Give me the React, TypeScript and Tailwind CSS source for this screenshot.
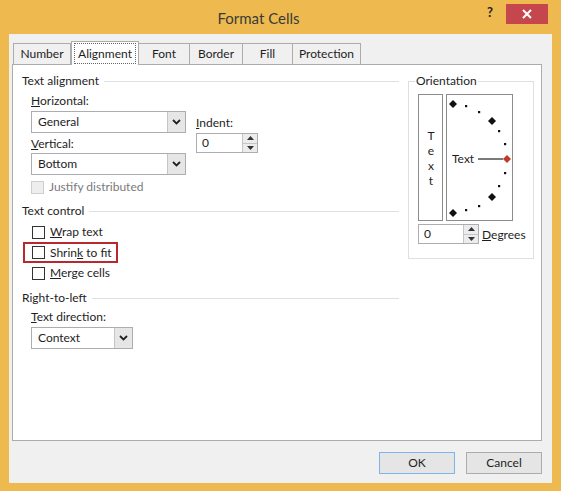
const font = { fontFamily: 'Lato, "Open Sans", "Liberation Sans", sans-serif' };

function Chevron() {
    return (
        <svg width="9" height="6" viewBox="0 0 9 6">
            <path d="M1 1 L4.5 4.5 L8 1" fill="none" stroke="#222" strokeWidth="1.8" />
        </svg>
    );
}

function Select({ value, width }: { value: string; width: string }) {
    return (
        <div className={`flex h-[22px] ${width} border border-[#abadb3] bg-white`}>
            <div className="flex-1 flex items-center pl-[6px] text-[12px] text-[#1e1e1e]">{value}</div>
            <div className="w-[18px] flex items-center justify-center bg-[#e6e6e6] border-l border-[#c5c5c5]">
                <Chevron />
            </div>
        </div>
    );
}

function Spinner({ value, width }: { value: string; width: string }) {
    return (
        <div className={`flex h-[20px] ${width} border border-[#abadb3] bg-white`}>
            <div className="flex-1 flex items-center pl-[5px] text-[12px] text-[#1e1e1e]">{value}</div>
            <div className="w-[15px] flex flex-col border-l border-[#c5c5c5] bg-[#ececec]">
                <div className="flex-1 flex items-center justify-center border-b border-[#c5c5c5]">
                    <svg width="7" height="4" viewBox="0 0 7 4"><path d="M0 4 L3.5 0 L7 4 Z" fill="#333" /></svg>
                </div>
                <div className="flex-1 flex items-center justify-center">
                    <svg width="7" height="4" viewBox="0 0 7 4"><path d="M0 0 L3.5 4 L7 0 Z" fill="#333" /></svg>
                </div>
            </div>
        </div>
    );
}

function GroupTitle({ title }: { title: string }) {
    return (
        <div className="flex items-center gap-[5px] text-[12px] text-[#1e1e1e] leading-[16px]">
            <span>{title}</span>
            <div className="flex-1 h-px bg-[#dcdfe3]" />
        </div>
    );
}

function Check({ label, u, disabled }: { label: [string, string, string]; u?: boolean; disabled?: boolean }) {
    return (
        <div className="flex items-center gap-[5px] h-[20px] text-[12px]">
            <div className={`w-[13px] h-[13px] border ${disabled ? "border-[#cfcfcf] bg-[#eeeeee]" : "border-[#333] bg-white"}`} />
            <span className={disabled ? "text-[#7a7a7a]" : "text-[#1e1e1e]"}>
                {label[0]}
                {u ? <span className="underline">{label[1]}</span> : label[1]}
                {label[2]}
            </span>
        </div>
    );
}

function Dial() {
    const small = [
        [19, 11], [32, 17], [52, 36], [58, 49], [58, 78], [52, 91], [32, 111], [19, 115],
    ];
    const big = [
        [6, 9], [45, 26], [45, 102], [6, 118],
    ];
    return (
        <div className="w-[67px] h-[127px] border border-[#8c8c8c] bg-white">
            <svg width="65" height="125" viewBox="0 0 65 125">
                {small.map(([x, y], i) => (
                    <rect key={i} x={x - 1} y={y - 1} width="2.2" height="2.2" fill="#111" />
                ))}
                {big.map(([x, y], i) => (
                    <path key={i} d={`M${x} ${y - 4} L${x + 4} ${y} L${x} ${y + 4} L${x - 4} ${y} Z`} fill="#111" />
                ))}
                <line x1="31" y1="64" x2="56" y2="64" stroke="#333" strokeWidth="1.3" />
                <path d="M60 60 L64 64 L60 68 L56 64 Z" fill="#c0392b" />
                <text x="5" y="68" fontSize="12" fill="#1e1e1e" style={font}>Text</text>
            </svg>
        </div>
    );
}

export default function App() {
    return (
        <div className="w-[561px] h-[491px] bg-[#eeba4f] flex flex-col overflow-hidden" style={font}>
            {/* title bar */}
            <div className="h-[34px] flex items-start relative">
                <div className="flex-1 text-center pt-[7px] pr-[44px] text-[15px] text-[#3a3a3a]">Format Cells</div>
                <div className="absolute left-[487px] top-[3px] text-[13px] font-bold text-[#222]">?</div>
                <div className="absolute left-[506px] top-[4px] w-[42px] h-[20px] bg-[#c6464d] flex items-center justify-center">
                    <svg width="10" height="10" viewBox="0 0 10 10">
                        <path d="M1 1 L9 9 M9 1 L1 9" stroke="#fff" strokeWidth="2" />
                    </svg>
                </div>
            </div>

            {/* body */}
            <div className="flex-1 mx-[9px] mb-[8px] bg-[#f0f0f0] flex flex-col pl-[3px] pr-[10px] pt-[7px]">
                {/* tabs */}
                <div className="flex items-end h-[23px] pl-[1px] text-[12px] text-[#1e1e1e]">
                    <div className="h-[21px] w-[58px] flex items-center justify-center border border-b-0 border-[#acacac] bg-[#f0f0f0]">Number</div>
                    <div className="relative z-10 h-[24px] w-[68px] -mb-px flex items-start justify-center pt-[1px] border border-b-0 border-[#acacac] bg-white">
                        <span className="w-[62px] text-center border border-dotted border-[#666] leading-[19px]">Alignment</span>
                    </div>
                    <div className="h-[21px] w-[51px] flex items-center justify-center border border-b-0 border-l-0 border-[#acacac] bg-[#f0f0f0]">Font</div>
                    <div className="h-[21px] w-[53px] flex items-center justify-center border border-b-0 border-l-0 border-[#acacac] bg-[#f0f0f0]">Border</div>
                    <div className="h-[21px] w-[50px] flex items-center justify-center border border-b-0 border-l-0 border-[#acacac] bg-[#f0f0f0]">Fill</div>
                    <div className="h-[21px] w-[68px] flex items-center justify-center border border-b-0 border-l-0 border-[#acacac] bg-[#f0f0f0]">Protection</div>
                </div>

                {/* panel */}
                <div className="h-[377px] border border-[#acacac] bg-white flex pl-[9px] pt-[8px] text-[12px] text-[#1e1e1e]">
                    {/* left column */}
                    <div className="w-[377px] flex flex-col">
                        <GroupTitle title="Text alignment" />
                        <div className="pl-[9px] pt-[3px]">
                            <div className="leading-[17px]"><span className="underline">H</span>orizontal:</div>
                            <div className="flex items-start gap-[10px] mt-[2px]">
                                <div className="flex flex-col">
                                    <Select value="General" width="w-[155px]" />
                                    <div className="leading-[17px] mt-[2px]"><span className="underline">V</span>ertical:</div>
                                    <div className="mt-[1px]">
                                        <Select value="Bottom" width="w-[155px]" />
                                    </div>
                                </div>
                                <div className="flex flex-col pt-[3px]">
                                    <div className="leading-[17px]"><span className="underline">I</span>ndent:</div>
                                    <div className="mt-[2px]">
                                        <Spinner value="0" width="w-[62px]" />
                                    </div>
                                </div>
                            </div>
                            <div className="mt-[2px]">
                                <Check label={["Justify distributed", "", ""]} disabled />
                            </div>
                        </div>

                        <div className="mt-[6px]">
                            <GroupTitle title="Text control" />
                        </div>
                        <div className="pl-[1px] pt-[3px] flex flex-col">
                            <div className="pl-[9px]">
                                <Check label={["", "W", "rap text"]} u />
                            </div>
                            <div className="w-[95px] h-[21px] border-2 border-[#b8282f] flex items-center pl-[7px]">
                                <Check label={["Shrin", "k", " to fit"]} u />
                            </div>
                            <div className="pl-[9px]">
                                <Check label={["", "M", "erge cells"]} u />
                            </div>
                        </div>

                        <div className="mt-[7px]">
                            <GroupTitle title="Right-to-left" />
                        </div>
                        <div className="pl-[9px] pt-[2px]">
                            <div className="leading-[17px]"><span className="underline">T</span>ext direction:</div>
                            <div className="mt-[2px]">
                                <Select value="Context" width="w-[102px]" />
                            </div>
                        </div>
                    </div>

                    {/* orientation */}
                    <div className="ml-[9px] w-[126px] h-[178px] mt-[8px] border border-[#dcdfe3] border-t-0 flex flex-col">
                        <div className="flex items-center -mt-[8px] text-[12px] leading-[16px]">
                            <div className="w-[6px] h-px bg-[#dcdfe3]" />
                            <span className="px-[1px] bg-white">Orientation</span>
                            <div className="flex-1 h-px bg-[#dcdfe3]" />
                        </div>
                        <div className="flex gap-[3px] pl-[9px] pt-[5px]">
                            <div className="w-[25px] h-[127px] border border-[#8c8c8c] flex items-center justify-center text-[12px]">
                                <span className="[writing-mode:vertical-lr] [text-orientation:upright] leading-[12px]">Text</span>
                            </div>
                            <Dial />
                        </div>
                        <div className="flex items-center gap-[3px] pl-[9px] pt-[3px]">
                            <Spinner value="0" width="w-[61px]" />
                            <span className="pt-[2px]"><span className="underline">D</span>egrees</span>
                        </div>
                    </div>
                </div>

                {/* buttons */}
                <div className="flex justify-end gap-[11px] pt-[11px] text-[12px] text-[#1e1e1e]">
                    <div className="w-[76px] h-[22px] flex items-center justify-center border border-[#7eb4ea] bg-[#e5e5e5]">OK</div>
                    <div className="w-[76px] h-[22px] flex items-center justify-center border border-[#acacac] bg-[#e5e5e5]">Cancel</div>
                </div>
            </div>
        </div>
    );
}
